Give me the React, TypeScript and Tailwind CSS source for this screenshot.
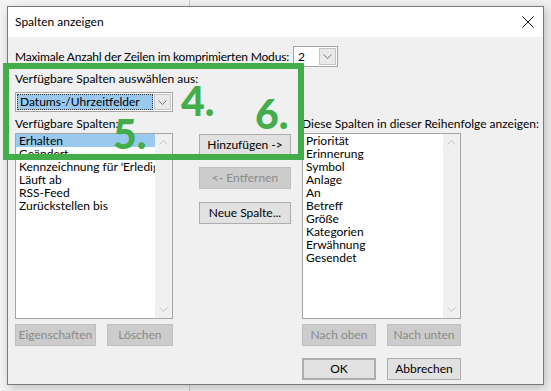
import clsx from "clsx";

const availableColumns = [
  "Erhalten",
  "Geändert",
  "Kennzeichnung für 'Erledigt'",
  "Läuft ab",
  "RSS-Feed",
  "Zurückstellen bis",
];

const shownColumns = [
  "Priorität",
  "Erinnerung",
  "Symbol",
  "Anlage",
  "An",
  "Betreff",
  "Größe",
  "Kategorien",
  "Erwähnung",
  "Gesendet",
];

function Chevron({ up }: { up?: boolean }) {
  return (
    <svg width="9" height="5" viewBox="0 0 9 5" fill="none" stroke="currentColor" strokeWidth="1">
      <path d={up ? "M0.5 4.5 4.5 0.5 8.5 4.5" : "M0.5 0.5 4.5 4.5 8.5 0.5"} />
    </svg>
  );
}

function DropButton() {
  return (
    <div className="flex w-[17px] items-center justify-center self-stretch border border-[#c4c4c4] bg-[#e9e9e9] text-[#7a7a7a]">
      <Chevron />
    </div>
  );
}

function ListBox({ items, selected }: { items: string[]; selected?: number }) {
  return (
    <div className="flex h-[186px] border border-[#a5a5a5] bg-white">
      <div className="min-w-0 flex-1 overflow-hidden">
        {items.map((item, i) => (
          <div
            key={item}
            className={clsx(
              "h-[13px] whitespace-nowrap pl-[3px] leading-[13px]",
              i === selected && "bg-[#99c9ef]"
            )}
          >
            {item}
          </div>
        ))}
      </div>
      <div className="flex w-[17px] flex-col items-center justify-between bg-[#f0f0f0] py-[6px] text-[#c3c3c3]">
        <Chevron up />
        <Chevron />
      </div>
    </div>
  );
}

function Btn({
  children,
  disabled,
  primary,
  className,
}: {
  children: React.ReactNode;
  disabled?: boolean;
  primary?: boolean;
  className?: string;
}) {
  return (
    <button
      className={clsx(
        "flex h-[22px] items-center justify-center",
        disabled
          ? "border border-[#bfbfbf] bg-[#cccccc] text-[#8a8a8a]"
          : "border border-[#adadad] bg-[#e1e1e1] text-black",
        primary && "border-2 border-[#0078d7]",
        className
      )}
    >
      {children}
    </button>
  );
}

export default function App() {
  return (
    <div className="relative h-[391px] w-[551px] overflow-hidden bg-[#f0f0f0] font-['Lato',sans-serif] text-[12px] text-black">
      {/* window behind the dialog */}
      <div className="h-full w-[190px] border-r border-[#cdcdcd] bg-[#f4f4f4]" />

      <div className="absolute left-[7px] top-[6px] flex h-[379px] w-[537px] flex-col border border-[#7a7a7a] bg-[#f0f0f0] shadow-[2px_3px_10px_rgba(0,0,0,0.22)]">
        <div className="flex h-[30px] shrink-0 items-center justify-between bg-white pl-[7px] pr-[9px]">
          <span>Spalten anzeigen</span>
          <svg width="12" height="12" viewBox="0 0 12 12" stroke="#111" strokeWidth="1">
            <path d="M0.5 0.5 11.5 11.5M11.5 0.5 0.5 11.5" />
          </svg>
        </div>

        <div className="flex flex-1 flex-col px-[7px] pt-[9px]">
          <div className="flex h-[21px] items-center gap-[4px]">
            <span className="tracking-[-0.18px]">
              Maximale Anzahl der Zeilen im komprimierten Modus:
            </span>
            <div className="flex h-[21px] w-[45px] border border-[#a5a5a5] bg-white p-[1px]">
              <span className="flex-1 pl-[3px] leading-[17px]">2</span>
              <DropButton />
            </div>
          </div>

          <div className="mt-[4px] leading-[16px]">Verfügbare Spalten auswählen aus:</div>

          <div className="mt-[5px] flex h-[20px] w-[158px] border border-[#a5a5a5] bg-white p-[1px]">
            <div className="mr-[1px] flex-1 border border-dotted border-[#333] bg-[#99c9ef] pl-[2px] leading-[14px]">
              Datums-/Uhrzeitfelder
            </div>
            <DropButton />
          </div>

          <div className="mt-[4px] flex">
            <div className="flex w-[158px] flex-col">
              <div className="leading-[16px]">Verfügbare Spalten:</div>
              <div className="mt-[1px]">
                <ListBox items={availableColumns} selected={0} />
              </div>
              <div className="mt-[5px] flex gap-[11px]">
                <Btn disabled className="w-[89px]">Eigenschaften</Btn>
                <Btn disabled className="w-[73px]">Löschen</Btn>
              </div>
            </div>

            <div className="ml-[26px] flex w-[92px] flex-col">
              <Btn className="mt-[18px] h-[21px]">Hinzufügen -&gt;</Btn>
              <Btn disabled className="mt-[11px] h-[21px]">&lt;- Entfernen</Btn>
              <Btn className="mt-[13px] h-[21px]">Neue Spalte...</Btn>
            </div>

            <div className="ml-[11px] flex w-[159px] flex-col">
              <div className="whitespace-nowrap leading-[16px]">
                Diese Spalten in dieser Reihenfolge anzeigen:
              </div>
              <div className="mt-[1px]">
                <ListBox items={shownColumns} />
              </div>
              <div className="mt-[5px] flex gap-[11px]">
                <Btn disabled className="w-[74px]">Nach oben</Btn>
                <Btn disabled className="w-[74px]">Nach unten</Btn>
              </div>
              <div className="mt-[12px] flex gap-[11px]">
                <Btn primary className="w-[74px]">OK</Btn>
                <Btn className="w-[74px]">Abbrechen</Btn>
              </div>
            </div>
          </div>
        </div>
      </div>

      {/* tutorial annotations */}
      <div className="absolute left-[3px] top-[63px] h-[97px] w-[301px] border-[6px] border-[#43ad4a]" />
      <div className="absolute left-[181px] top-[80px] font-['Lato',sans-serif] text-[41px] font-black leading-none text-[#43ad4a]">
        4.
      </div>
      <div className="absolute left-[113px] top-[113px] font-['Lato',sans-serif] text-[41px] font-black leading-none text-[#43ad4a]">
        5.
      </div>
      <div className="absolute left-[255px] top-[93px] font-['Lato',sans-serif] text-[41px] font-black leading-none text-[#43ad4a]">
        6.
      </div>
    </div>
  );
}
